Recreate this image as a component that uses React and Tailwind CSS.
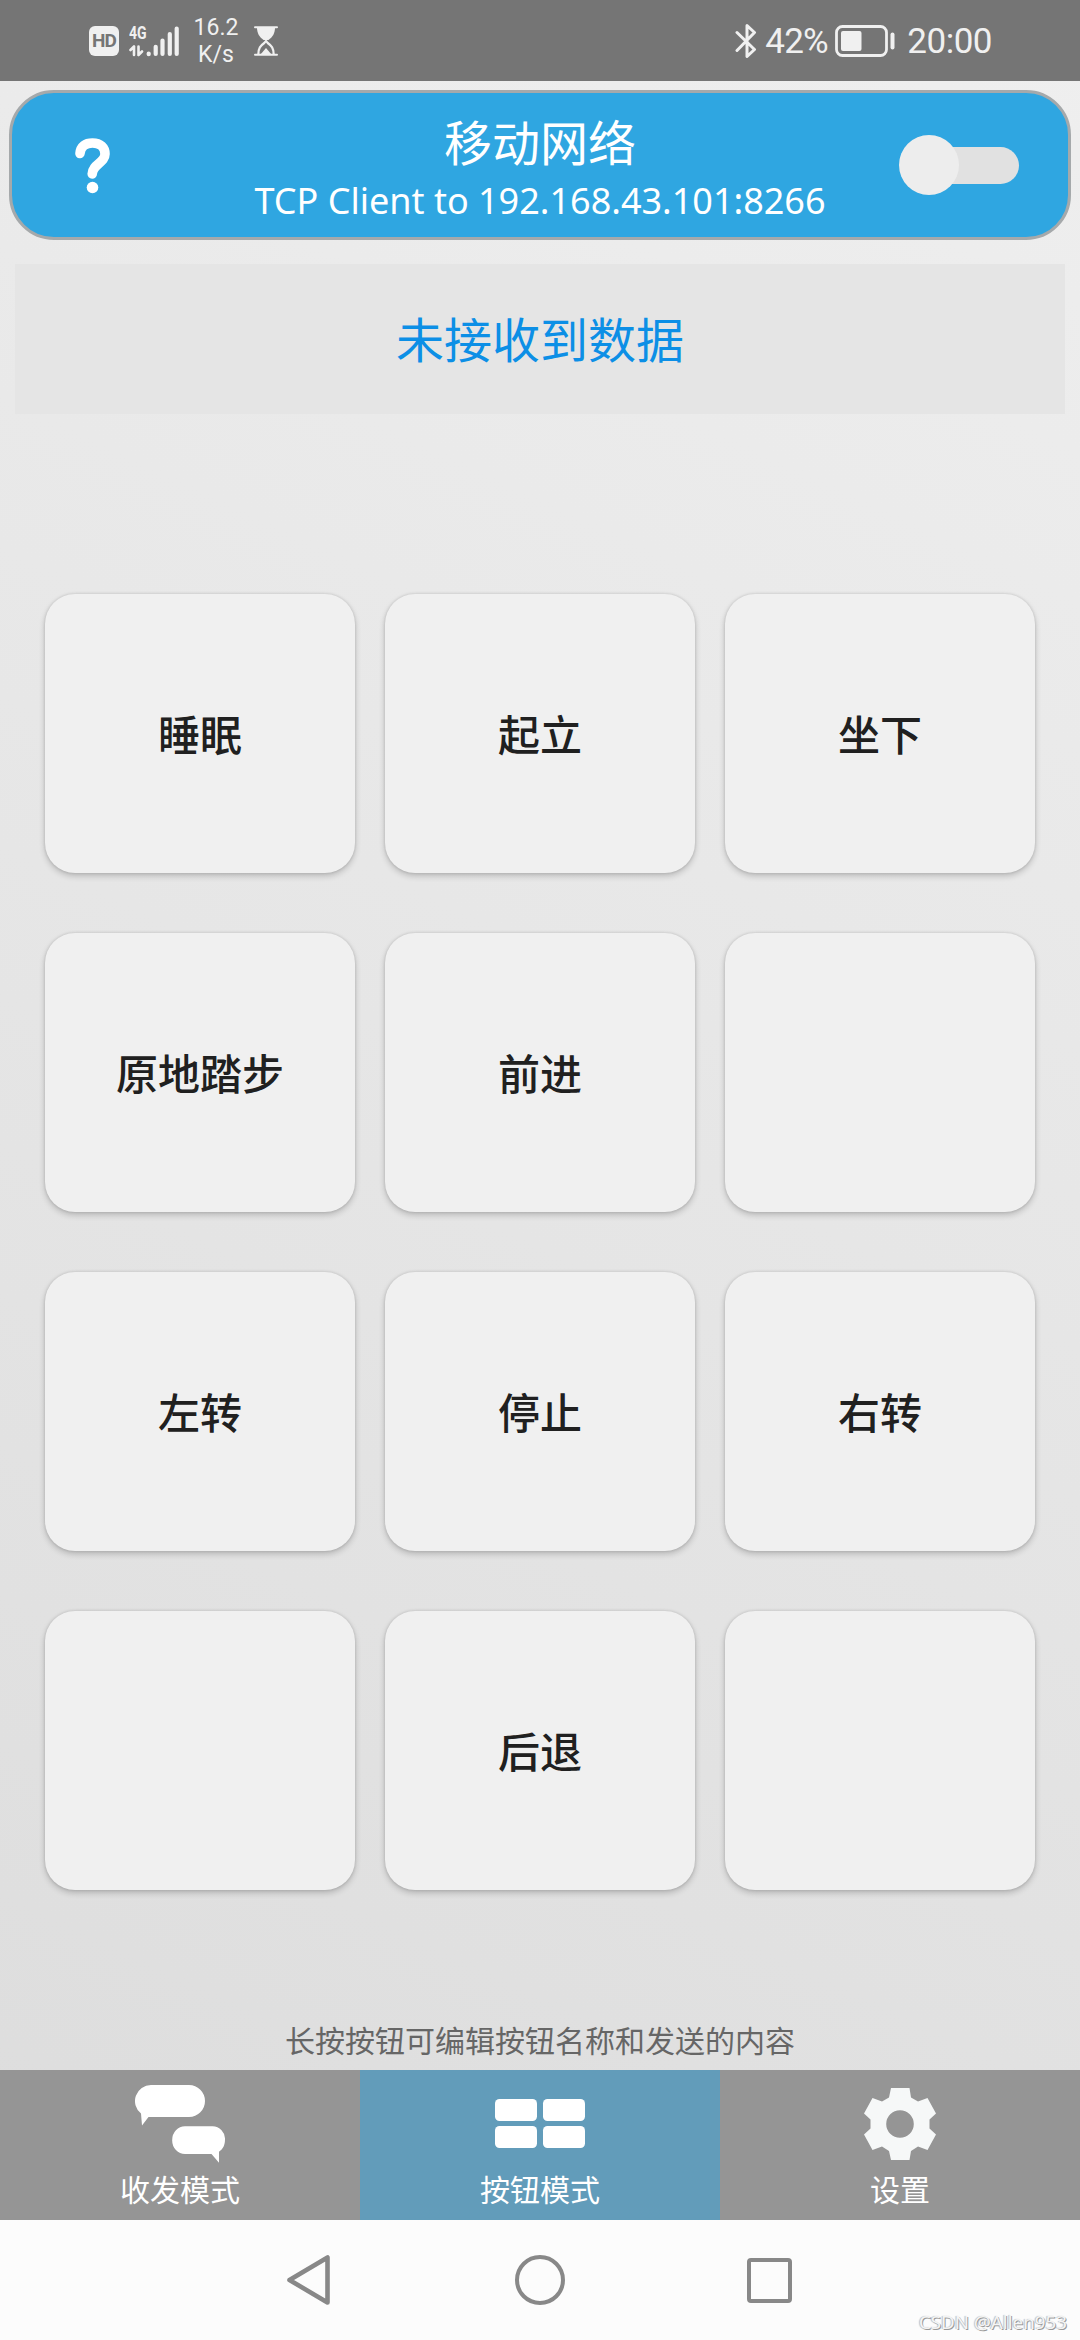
import { useState } from "react";

const buttons = [
  "睡眠", "起立", "坐下",
  "原地踏步", "前进", "",
  "左转", "停止", "右转",
  "", "后退", "",
];

function StatusBar() {
  return (
    <div className="flex h-[81px] items-center justify-between bg-[#757575] pl-[89px] pr-[88px] text-[#f0f0f0]">
      <div className="flex items-center">
        <div className="flex size-[30px] items-center justify-center rounded-[6px] bg-[#f0f0f0] font-['Roboto',sans-serif] text-[19px] leading-none font-bold text-[#757575]">
          <span className="-mx-1 tracking-[-1px]">HD</span>
        </div>
        <div className="relative ml-[10px] h-[32px] w-[51px]">
          <span className="absolute top-[1px] left-0 origin-left scale-x-[0.78] font-['Roboto',sans-serif] text-[18px] leading-[13px] font-bold">4G</span>
          <svg className="absolute inset-0" width="51" height="32" viewBox="0 0 51 32" fill="none" stroke="currentColor" strokeLinecap="round">
            <path d="M5 21.5V30M1.500 25l3.500-3.500M9.500 21.500V30M9.500 30l3.500-3.500" strokeWidth="2.600" />
            <path d="M19.700 28.600v0.600M26.700 21.800V29M33.500 15.500V29M40.800 9V29M47.700 3.500V29" strokeWidth="4.200" />
          </svg>
        </div>
        <div className="mt-[2px] ml-[12px] w-[48px] text-center font-['Roboto',sans-serif] text-[23px] leading-[26.500px]">
          16.2
          <br />
          K/s
        </div>
        <svg className="ml-[14px]" width="24" height="30" viewBox="0 0 24 30" fill="none">
          <path d="M1 1.200h22M1 28.800h22" stroke="currentColor" strokeWidth="2" strokeLinecap="round" />
          <path d="M3 1.500h18c0 6-2.500 9.500-6.500 12.500h-5C5.500 11 3 7.500 3 1.500z" fill="currentColor" />
          <path d="M4.300 28.500c0-6.500 2.200-8.800 6-11.500l1.700-2 1.700 2c3.800 2.700 6 5 6 11.500" stroke="currentColor" strokeWidth="2.200" />
          <path d="M6.500 28.500l5.500-6.500 5.500 6.500z" fill="currentColor" />
        </svg>
      </div>
      <div className="flex items-center">
        <svg width="22" height="34" viewBox="0 0 22 34" fill="none" stroke="currentColor" strokeWidth="3" strokeLinecap="round" strokeLinejoin="round">
          <path d="M2 8.500L19.500 25.500 12 32.500V1.500L19.500 8.500 2 26.500" />
        </svg>
        <span className="mt-[2px] ml-[8px] w-[68px] font-['Roboto',sans-serif] text-[35px] leading-none tracking-[-0.8px]">42%</span>
        <svg className="ml-[2px]" width="60" height="34" viewBox="0 0 60 34" fill="none">
          <rect x="1.500" y="2.500" width="50" height="29" rx="6" stroke="currentColor" strokeWidth="2.800" />
          <rect x="6" y="7" width="20.500" height="20" rx="2" fill="currentColor" />
          <rect x="55.500" y="8.500" width="4" height="17" rx="2" fill="currentColor" />
        </svg>
        <span className="mt-[2px] ml-[12px] font-['Roboto',sans-serif] text-[35px] leading-none tracking-[-0.5px]">20:00</span>
      </div>
    </div>
  );
}

function Header({ on, onToggle }) {
  return (
    <header className="mx-[9px] mt-[9px] flex h-[150px] items-center rounded-[45px] border-3 border-[#a5a9ab] bg-[#2fa6e1] text-white">
      <div className="flex w-[200px] pl-[60px]">
        <svg width="42" height="58" viewBox="0 0 42 58" fill="none">
          <path d="M8 17.500C8.500 10 13.500 7 20.500 7c8 0 12.500 4.500 12.500 11 0 9-12.500 10-12.800 20" stroke="currentColor" strokeWidth="9.600" strokeLinecap="round" />
          <circle cx="20.500" cy="51.500" r="5.800" fill="currentColor" />
        </svg>
      </div>
      <div className="flex flex-1 flex-col items-center pt-[11px]">
        <div className="text-[48px] leading-[56px]">移动网络</div>
        <div className="mt-1 font-['Noto_Sans',sans-serif] text-[36px] leading-[58px] whitespace-nowrap">TCP Client to 192.168.43.101:8266</div>
      </div>
      <div className="flex w-[200px] justify-end pr-[49px]">
        <button onClick={onToggle} className="relative flex h-[61px] w-[120px] items-center justify-end">
          <span className={on ? "h-[37px] w-[110px] rounded-full bg-[#9bd3f0]" : "h-[37px] w-[110px] rounded-full bg-[#e1e1e1]"} />
          <span className={on ? "absolute right-0 size-[60px] rounded-full bg-[#ededed]" : "absolute left-0 size-[60px] rounded-full bg-[#ededed]"} />
        </button>
      </div>
    </header>
  );
}

function ChatIcon() {
  return (
    <svg width="90" height="78" viewBox="0 0 90 78" fill="#fff">
      <path d="M16 0h38a16 16 0 0 1 0 32H13.500L7 40.500 6 28.500A16 16 0 0 1 16 0z" />
      <path d="M50 41.300h27.500a12.500 12.500 0 0 1 12.500 13c0 6-2 9.500-6 12.500v11L76.500 69H50a12.800 13.800 0 0 1 0-27.700z" />
    </svg>
  );
}

function GridIcon() {
  return (
    <svg width="90" height="78" viewBox="0 0 90 78" fill="#fff">
      <rect x="0" y="14" width="42" height="22" rx="4.500" />
      <rect x="48" y="14" width="42" height="22" rx="4.500" />
      <rect x="0" y="41" width="42" height="22" rx="4.500" />
      <rect x="48" y="41" width="42" height="22" rx="4.500" />
    </svg>
  );
}

function GearIcon() {
  return (
    <svg width="90" height="78" viewBox="-45 -39 90 78" fill="#f6f8f8">
      <path
        fillRule="evenodd"
        d="M-9-36H9.500L11-26.500 18-22.500 27.500-26 36-10.500 29.500-4.500V4.500L36 10.500 27.500 26 18 22.500 11 27 9.500 36H-9L-11 27-18 22.500-27.500 26-36 10.500-29.500 4.500V-4.500L-36-10.500-27.500-26-18-22.500-11-26.500zM0-13.800a13.800 13.800 0 1 0 0 27.600 13.800 13.800 0 1 0 0-27.600z"
      />
    </svg>
  );
}

const tabs = [
  { label: "收发模式", Icon: ChatIcon },
  { label: "按钮模式", Icon: GridIcon },
  { label: "设置", Icon: GearIcon },
];

export default function App() {
  const [on, setOn] = useState(false);
  const [active, setActive] = useState(1);

  return (
    <div className="flex h-[2340px] w-[1080px] flex-col overflow-hidden bg-[linear-gradient(205deg,#efefef,#dcdcdc)] font-['Noto_Sans_CJK_SC',sans-serif]">
      <StatusBar />
      <Header on={on} onToggle={() => setOn(!on)} />

      <div className="mx-[15px] mt-6 flex h-[150px] items-center justify-center bg-[#e5e5e5] pb-[5px] text-[48px] text-[#0c8fe6]">
        未接收到数据
      </div>

      <div className="mx-[45px] mt-[180px] grid grid-cols-3 gap-x-[30px] gap-y-[60px]">
        {buttons.map((name, i) => (
          <button
            key={i}
            className="h-[279px] rounded-[30px] bg-[#f0f0f0] pb-[2px] text-[42px] font-medium text-[#202020] shadow-[0_3px_6px_rgba(0,0,0,0.2),0_0_3px_rgba(0,0,0,0.14)]"
          >
            {name}
          </button>
        ))}
      </div>

      <p className="mt-auto pb-[9px] text-center text-[30px] leading-[44px] text-[#666666]">长按按钮可编辑按钮名称和发送的内容</p>

      <nav className="grid h-[150px] grid-cols-3">
        {tabs.map(({ label, Icon }, i) => (
          <button
            key={label}
            onClick={() => setActive(i)}
            className={
              i === active
                ? "flex flex-col items-center bg-[#629cba] pt-[15px] text-white"
                : "flex flex-col items-center bg-[#959595] pt-[15px] text-white"
            }
          >
            <Icon />
            <span className="mt-[3px] text-[30px] leading-[44px]">{label}</span>
          </button>
        ))}
      </nav>

      {/* system navigation */}
      <div className="relative flex h-[120px] items-center bg-[#fcfcfc] pl-[286px]">
        <svg width="46" height="52" viewBox="0 0 46 52" fill="none" stroke="#888888" strokeWidth="4.600" strokeLinejoin="round">
          <path d="M3.500 26L41.500 3.500V48.500z" />
        </svg>
        <div className="ml-[183px] size-[50px] rounded-full border-[4.500px] border-[#888888]" />
        <div className="ml-[182px] size-[45px] rounded-[4px] border-4 border-[#888888]" />
        <span className="absolute right-[13px] bottom-[5px] font-['Noto_Sans',sans-serif] text-[18.800px] leading-[26px] text-[#f4f4f4] [text-shadow:1px_1px_0_#999,-1px_0_1px_#bbb]">
          CSDN @Allen953
        </span>
      </div>
    </div>
  );
}
